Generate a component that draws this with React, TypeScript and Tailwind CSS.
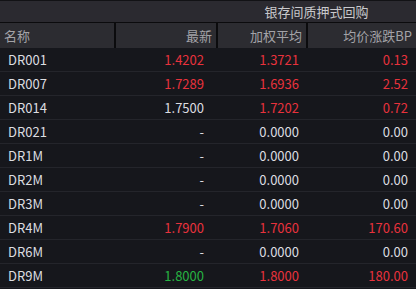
import React from 'react';

type Row = { name: string; last: string; avg: string; bp: string; lastC: string; avgC: string; bpC: string };

const W = 'text-[#dcdde0]';
const R = 'text-[#e8323c]';
const G = 'text-[#27b443]';

const rows: Row[] = [
  { name: 'DR001', last: '1.4202', avg: '1.3721', bp: '0.13', lastC: R, avgC: R, bpC: R },
  { name: 'DR007', last: '1.7289', avg: '1.6936', bp: '2.52', lastC: R, avgC: R, bpC: R },
  { name: 'DR014', last: '1.7500', avg: '1.7202', bp: '0.72', lastC: W, avgC: R, bpC: R },
  { name: 'DR021', last: '-', avg: '0.0000', bp: '0.00', lastC: W, avgC: W, bpC: W },
  { name: 'DR1M', last: '-', avg: '0.0000', bp: '0.00', lastC: W, avgC: W, bpC: W },
  { name: 'DR2M', last: '-', avg: '0.0000', bp: '0.00', lastC: W, avgC: W, bpC: W },
  { name: 'DR3M', last: '-', avg: '0.0000', bp: '0.00', lastC: W, avgC: W, bpC: W },
  { name: 'DR4M', last: '1.7900', avg: '1.7060', bp: '170.60', lastC: R, avgC: R, bpC: R },
  { name: 'DR6M', last: '-', avg: '0.0000', bp: '0.00', lastC: W, avgC: W, bpC: W },
  { name: 'DR9M', last: '1.8000', avg: '1.8000', bp: '180.00', lastC: G, avgC: R, bpC: R },
];

const App = () => {
  return (
    <div
      className="w-[416px] h-[289px] overflow-hidden bg-[#16171c] text-[13px] leading-none"
      style={{ fontFamily: '"Noto Sans CJK SC", "Noto Sans", sans-serif' }}
    >
      {/* Title bar */}
      <div className="h-[23px] bg-[#2b2a30] border-t border-[#121215] border-b border-b-[#0b0b0d] flex">
        <div className="w-[217px]" />
        <div className="flex-1 flex items-center justify-center text-[#c9c9cc] pb-[1px]">银存间质押式回购</div>
      </div>

      {/* Column headers */}
      <div className="h-[25px] bg-[#2c2c31] flex text-[#a3a3a8]">
        <div className="w-[116px] border-r-2 border-[#0b0b0d] flex items-center pl-[4px]">名称</div>
        <div className="w-[102px] border-r-2 border-[#0b0b0d] flex items-center justify-end pr-[4px]">最新</div>
        <div className="w-[90px] border-r-2 border-[#0b0b0d] flex items-center justify-end pr-[4px]">加权平均</div>
        <div className="flex-1 flex items-center justify-end pr-[4px]">均价涨跌BP</div>
      </div>

      {/* Data rows */}
      {rows.map((r) => (
        <div key={r.name} className="h-[24px] flex border-b border-[#24252b]">
          <div className="w-[116px] flex items-center pl-[8px] text-[#dcdde0]">{r.name}</div>
          <div className={`w-[88px] flex items-center justify-end ${r.lastC}`}>{r.last}</div>
          <div className={`w-[95px] flex items-center justify-end ${r.avgC}`}>{r.avg}</div>
          <div className={`w-[109px] flex items-center justify-end ${r.bpC}`}>{r.bp}</div>
        </div>
      ))}
    </div>
  );
};

export default App;
